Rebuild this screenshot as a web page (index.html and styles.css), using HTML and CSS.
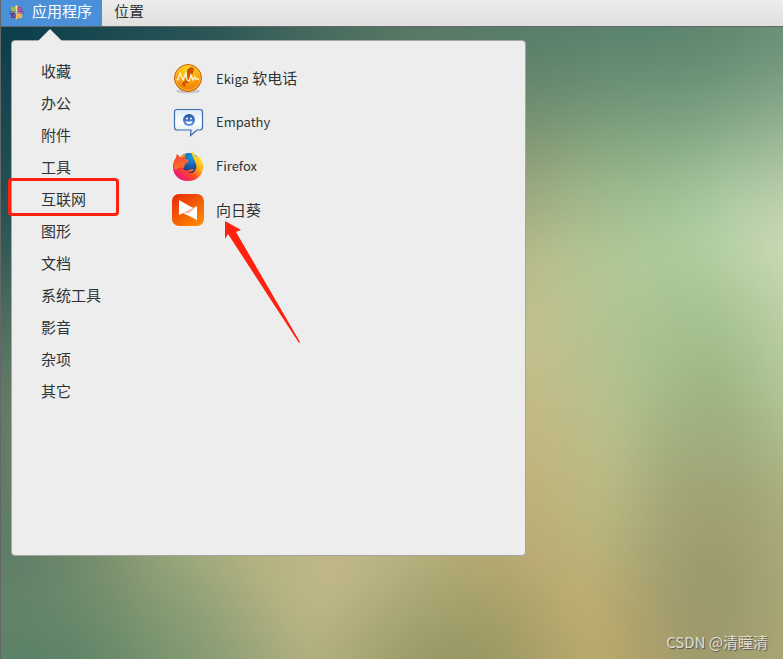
FILE: index.html
```
<!DOCTYPE html>
<html lang="zh-CN">
<head>
    <meta charset="UTF-8">
    <title>应用程序</title>
    <link rel="stylesheet" href="styles.css">
</head>
<body>
    <header class="topbar">
        <button class="topbar-button active">
            <svg class="logo" viewBox="0 0 16 16">
                <path fill="#f4d35e" d="M8 0l3 3v4H5V3z"/>
                <path fill="#7b3b8c" d="M16 8l-3 3H9V5h4z"/>
                <path fill="#e8a33b" d="M8 16l-3-3V9h6v4z"/>
                <path fill="#3c4690" d="M0 8l3-3h4v6H3z"/>
                <path fill="#92b83e" d="M2 2h5v5H2z"/>
                <path fill="#a94588" d="M9 2h5v5H9z"/>
                <path fill="#eeb23c" d="M9 9h5v5H9z"/>
                <path fill="#534089" d="M2 9h5v5H2z"/>
                <path stroke="#fff" stroke-width=".5" opacity=".7" d="M8 1v14M1 8h14M3 3l10 10M13 3L3 13"/>
            </svg>
            应用程序
        </button>
        <button class="topbar-button">位置</button>
    </header>

    <main class="desktop">
        <div class="menu">
            <svg class="menu-tip" viewBox="0 0 24 12"><path fill="#ededed" d="M0 12L12 0l12 12z"/></svg>
            <nav class="categories">
                <a href="#">收藏</a>
                <a href="#">办公</a>
                <a href="#">附件</a>
                <a href="#">工具</a>
                <a href="#" class="marked">互联网</a>
                <a href="#">图形</a>
                <a href="#">文档</a>
                <a href="#">系统工具</a>
                <a href="#">影音</a>
                <a href="#">杂项</a>
                <a href="#">其它</a>
            </nav>
            <div class="apps">
                <a href="#">
                    <svg class="icon" viewBox="0 0 32 32">
                        <defs>
                            <radialGradient id="coin" cx=".5" cy=".2" r=".8">
                                <stop offset="0" stop-color="#ffdf18"/>
                                <stop offset=".6" stop-color="#fb9e0c"/>
                                <stop offset="1" stop-color="#e77808"/>
                            </radialGradient>
                        </defs>
                        <ellipse cx="16" cy="29" rx="12" ry="2.5" fill="#000" opacity=".15"/>
                        <circle cx="16" cy="16" r="13.5" fill="url(#coin)" stroke="#c6620b"/>
                        <circle cx="16" cy="16" r="12.3" fill="none" stroke="#ffc044" stroke-width=".8"/>
                        <path fill="#d35400" d="M17 6c5-2 6 1 4 5-1 3-2 3-3 6-1 2 0 4-3 4-3 1-3-1-2-3 1-2 2-2 2-5 0-4-1-5 2-7zM11 20c3-1 3 3 2 5-3-1-4-4-2-5z"/>
                        <path fill="none" stroke="#fff4d3" stroke-width="1.3" d="M5 17l1 1 2-7 3 7 3-7 1 7 2 1 2-6 2 5 2-3 1 2h3"/>
                    </svg>
                    <span><span class="latin">Ekiga</span> 软电话</span>
                </a>
                <a href="#">
                    <svg class="icon" viewBox="0 0 32 32">
                        <defs>
                            <linearGradient id="bubble" x2="0" y2="1">
                                <stop offset="0" stop-color="#dce9f6"/>
                                <stop offset=".5" stop-color="#fff"/>
                                <stop offset="1" stop-color="#cfe2f4"/>
                            </linearGradient>
                            <linearGradient id="face" x2="0" y2="1">
                                <stop offset="0" stop-color="#2459a3"/>
                                <stop offset="1" stop-color="#5c95da"/>
                            </linearGradient>
                        </defs>
                        <path fill="url(#bubble)" stroke="#3a6baa" stroke-width="1.2" d="M5 3.5H28Q30.500 3.500 30.500 6V21Q30.500 24 28 24H25L18.500 29.500 19 24H5Q2.500 24 2.500 21V6Q2.500 3.500 5 3.500z"/>
                        <circle cx="17" cy="14" r="6" fill="url(#face)"/>
                        <circle cx="15" cy="12.5" r="1" fill="#fff"/>
                        <circle cx="19" cy="12.5" r="1" fill="#fff"/>
                        <path fill="#fff" d="M13.500 15q3.500 1.500 7 0-.5 3-3.500 3t-3.500-3z"/>
                    </svg>
                    <span class="latin">Empathy</span>
                </a>
                <a href="#">
                    <svg class="icon" viewBox="0 0 32 32">
                        <defs>
                            <linearGradient id="fox" x1=".9" y1=".1" x2=".2" y2=".9">
                                <stop offset="0" stop-color="#fff036"/>
                                <stop offset=".35" stop-color="#ffb016"/>
                                <stop offset=".65" stop-color="#ff4c25"/>
                                <stop offset="1" stop-color="#e81779"/>
                            </linearGradient>
                            <linearGradient id="ear" x2="0" y2="1">
                                <stop offset="0" stop-color="#f0324a"/>
                                <stop offset="1" stop-color="#ff8a16"/>
                            </linearGradient>
                            <radialGradient id="globe" cx=".6" cy=".2" r=".8">
                                <stop offset="0" stop-color="#139be8"/>
                                <stop offset="1" stop-color="#20206e"/>
                            </radialGradient>
                        </defs>
                        <circle cx="17" cy="14" r="11" fill="url(#globe)"/>
                        <path fill="url(#fox)" d="M20 1c2 2 2 4 5 6l1-1c4 4 5 7 5 11 0 8-6 14-15 14C7 31 1 25 1 17c0-4 1-7 3-9l1-4 3 3c2-2 4-2 6-3-1 2-2 3-1 5l3 1c0 2-3 2-4 4 0 2-1 3-1 4 1 3 4 3 6 2 2 0 3-2 5 0-2 1-4 3-7 2 7 4 12-4 8-10-1-4-4-7-3-11z"/>
                        <path fill="url(#ear)" d="M5 4l3 4 6-2-1 4 4 1c0 2-3 2-4 4l-1 3c-3-1-6 0-9 2C1 15 2 10 4 8z" opacity=".8"/>
                    </svg>
                    <span class="latin">Firefox</span>
                </a>
                <a href="#">
                    <svg class="icon" viewBox="0 0 32 32">
                        <defs>
                            <linearGradient id="sun" x1="0" y1="0" x2=".8" y2="1">
                                <stop offset="0" stop-color="#e8260b"/>
                                <stop offset="1" stop-color="#ff8a00"/>
                            </linearGradient>
                        </defs>
                        <rect width="32" height="32" rx="7" fill="url(#sun)"/>
                        <path fill="#fff" d="M7 6l14 8L7 21zM25 12v14L11 19z"/>
                        <path fill="#ffb19a" d="M7 21l18-9-8 7-6 0z"/>
                    </svg>
                    向日葵
                </a>
            </div>
            <svg class="arrow" viewBox="0 0 76 122">
                <path fill="#ff2010" d="M1 0l16 9-5 2 64 110-1 1L4 13l-3 5z"/>
            </svg>
        </div>
        <p class="watermark">CSDN @清瞳清</p>
    </main>
</body>
</html>
```

FILE: styles.css
```
*,
*::before,
*::after {
    box-sizing: border-box;
}

body {
    margin: 0;
    min-height: 100vh;
    display: flex;
    flex-direction: column;
    border-left: 1px solid #666;
    color: #2e3436;
    font-family: "Noto Sans CJK SC", sans-serif;
    font-size: 15px;
    line-height: 24px;
}

a {
    color: inherit;
    text-decoration: none;
}

.topbar {
    display: flex;
    height: 27px;
    background: linear-gradient(#ededed, #e0e0e0);
    border-bottom: 1px solid #666;
}

.topbar-button {
    display: flex;
    align-items: center;
    gap: 8px;
    padding: 0 12px 4px;
    border: none;
    background: none;
    color: inherit;
    font: inherit;
}

.topbar-button.active {
    padding-left: 8px;
    padding-right: 10px;
    background: #4a90d9;
    color: white;
}

.logo {
    width: 15px;
    height: 15px;
    margin-top: 2px;
}

.desktop {
    flex: 1;
    position: relative;
    z-index: 0;
    overflow: hidden;
    padding: 13px 10px;
}

/* blurred wallpaper */
.desktop::before {
    content: "";
    position: absolute;
    z-index: -1;
    inset: -40px;
    filter: blur(16px);
    background:
        radial-gradient(ellipse 72% 80% at 4% 4%, #083c4a 0%, rgba(8, 60, 74, 0.75) 35%, rgba(8, 60, 74, 0.2) 70%, transparent 100%),
        radial-gradient(ellipse 64% 38% at 76% 0%, #4d7a68 0%, rgba(77, 122, 104, 0.7) 35%, rgba(77, 122, 104, 0.2) 75%, transparent 100%),
        radial-gradient(ellipse 34% 26% at 8% 99%, #557f65 0%, rgba(95, 133, 103, 0.6) 45%, transparent 100%),
        radial-gradient(ellipse 18% 34% at 4% 82%, #5f7b67 0%, transparent 100%),
        radial-gradient(ellipse 18% 20% at 57% 99%, rgba(133, 140, 89, 0.8) 0%, transparent 100%),
        radial-gradient(ellipse 14% 36% at 87% 86%, rgba(147, 145, 102, 0.85) 0%, rgba(148, 146, 104, 0.55) 45%, transparent 100%),
        radial-gradient(ellipse 13% 22% at 87% 54%, rgba(155, 185, 133, 0.8) 0%, transparent 100%),
        radial-gradient(ellipse 14% 35% at 98% 34%, #d0dcba 0%, transparent 100%),
        radial-gradient(ellipse 40% 58% at 90% 32%, #b4d7aa 0%, rgba(170, 203, 155, 0.75) 40%, rgba(170, 203, 155, 0.2) 78%, transparent 100%),
        radial-gradient(ellipse 16% 34% at 65% 49%, #d2bb86 0%, transparent 100%),
        radial-gradient(ellipse 13% 20% at 76% 95%, #bea96a 0%, transparent 100%),
        radial-gradient(ellipse 18% 28% at 43% 82%, #c1b987 0%, transparent 100%),
        linear-gradient(90deg, #84906d 0%, #a0ab7d 26%, #aba976 50%, #b7a870 65%, #beb67e 76%, #b5b07c 100%);
}

.menu {
    position: relative;
    display: flex;
    gap: 32px;
    width: 68%;
    max-width: 515px;
    min-height: 516px;
    padding: 15px 24px;
    background: #ededed;
    border: 1px solid #a3a69f;
    border-radius: 4px;
}

.menu-tip {
    position: absolute;
    left: 26px;
    top: -12px;
    width: 24px;
    height: 12px;
}

.categories {
    display: flex;
    flex-direction: column;
    width: 104px;
}

.categories a {
    position: relative;
    padding: 3px 5px 5px;
}

/* red box around the current category */
.marked::after {
    content: "";
    position: absolute;
    left: -28px;
    top: -6px;
    width: 111px;
    height: 38px;
    border: 3px solid #ff2010;
    border-radius: 4px;
}

.apps {
    display: flex;
    flex-direction: column;
    gap: 12px;
    padding-top: 6px;
}

.apps a {
    display: flex;
    align-items: center;
    gap: 12px;
    line-height: 22px;
}

.latin {
    font-size: 13px;
}

.icon {
    width: 32px;
    height: 32px;
}

.arrow {
    position: absolute;
    left: 212px;
    top: 180px;
    width: 76px;
    height: 122px;
}

.watermark {
    position: absolute;
    right: 15px;
    bottom: 5px;
    margin: 0;
    color: #e0dfcf;
    text-shadow: 1px 1px 1px #555;
}
```
